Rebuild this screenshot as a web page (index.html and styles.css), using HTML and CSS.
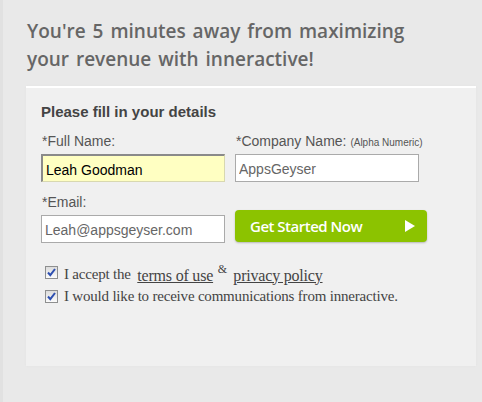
FILE: index.html
```html
<!DOCTYPE html>
<html lang="en">

<head>
    <meta charset="UTF-8">
    <title>Sign up - inneractive</title>
    <link rel="stylesheet" href="styles.css">
</head>

<body>
    <div class="page">
        <h1 class="headline">You're 5 minutes away from maximizing<br>your revenue with inneractive!</h1>

        <form class="panel" action="#" method="post">
            <h2>Please fill in your details</h2>

            <div class="grid">
                <div class="field">
                    <label for="fullname">*Full Name:</label>
                    <input type="text" id="fullname" class="text filled" value="Leah Goodman">
                </div>
                <div class="field">
                    <label for="company">*Company Name: <small>(Alpha Numeric)</small></label>
                    <input type="text" id="company" class="text" value="AppsGeyser">
                </div>
                <div class="field">
                    <label for="email">*Email:</label>
                    <input type="text" id="email" class="text" value="Leah@appsgeyser.com">
                </div>
                <div class="field action">
                    <button type="submit" class="go">Get Started Now <span class="arrow"></span></button>
                </div>
            </div>

            <div class="checks">
                <label class="check">
                    <span class="box"><svg width="11" height="11" viewBox="0 0 11 11"><path d="M2 5.5 L4.3 8.2 L9 2" fill="none" stroke="#2d4fb0" stroke-width="2"/></svg></span>
                    <span>I accept the <a href="#">terms of use</a> <sup>&amp;</sup> <a href="#">privacy policy</a></span>
                </label>
                <label class="check">
                    <span class="box"><svg width="11" height="11" viewBox="0 0 11 11"><path d="M2 5.5 L4.3 8.2 L9 2" fill="none" stroke="#2d4fb0" stroke-width="2"/></svg></span>
                    <span>I would like to receive communications from inneractive.</span>
                </label>
            </div>
        </form>
    </div>
</body>

</html>
```

FILE: styles.css
```css
html,
body {
    width: 100%;
    height: 100%;
    padding: 0;
    margin: 0;
}

body {
    background: #e9e9e9;
    font-family: "Liberation Sans", Arial, sans-serif;
}

.page {
    border-left: 3px solid #e1e1e1;
    padding: 17px 6px 0 23px;
    min-height: 100%;
    box-sizing: border-box;
}

.headline {
    margin: 0 0 13px 1px;
    font: 600 19px/28px "Open Sans", sans-serif;
    color: #666;
    word-spacing: 2px;
}

.panel {
    background: #f0f0f0;
    border-top: 2px solid #fff;
    box-shadow: 0 0 2px #e2e2e2;
    height: 280px;
    padding: 15px 0 0 15px;
    box-sizing: border-box;
}

h2 {
    margin: 0 0 13px;
    font-size: 15px;
    font-weight: bold;
    color: #444;
}

.grid {
    display: grid;
    grid-template-columns: 194px 194px;
    row-gap: 12px;
}

.field label {
    display: block;
    font-size: 14px;
    color: #555;
    margin: 0 0 5px 1px;
}

.field small {
    font-size: 10px;
}

.text {
    display: block;
    width: 184px;
    height: 28px;
    box-sizing: border-box;
    border: 1px solid #aaa;
    background: #fff;
    padding: 2px 3px 0;
    font: 14px "Liberation Sans", Arial, sans-serif;
    color: #666;
    margin: 0;
}

.text.filled {
    background: #ffffc2;
    color: #000;
    border-color: #8a8a8a #d8d8b0 #d8d8b0 #8a8a8a;
    border-width: 2px 1px 1px 2px;
}

.action {
    display: flex;
    align-items: flex-end;
}

.go {
    width: 192px;
    height: 32px;
    margin-bottom: 1px;
    border: 0;
    border-radius: 4px;
    background: #8cc300;
    box-shadow: 0 1px 2px #b8b8b8;
    color: #fff;
    font: 600 15px "Open Sans", sans-serif;
    letter-spacing: -0.5px;
    text-align: left;
    padding: 0 0 0 15px;
    display: flex;
    align-items: center;
    justify-content: space-between;
}

.arrow {
    width: 0;
    height: 0;
    border-left: 10px solid #fff;
    border-top: 6px solid transparent;
    border-bottom: 6px solid transparent;
    margin-right: 12px;
}

.checks {
    margin-top: 17px;
    padding-left: 4px;
}

.check {
    display: flex;
    align-items: center;
    gap: 6px;
    font: 15px "Liberation Serif", Georgia, serif;
    color: #444;
    height: 24px;
    letter-spacing: -0.2px;
}

.box {
    width: 13px;
    height: 13px;
    box-sizing: border-box;
    border: 1px solid #8e8f8f;
    background: linear-gradient(#dcdcdc, #fbfbfb);
    display: flex;
    flex: none;
}

.check a {
    color: #444;
    font-size: 16px;
    margin-left: 3px;
    position: relative;
    top: 2px;
}

.check sup {
    font-size: 12px;
    margin-left: 1px;
}
```
